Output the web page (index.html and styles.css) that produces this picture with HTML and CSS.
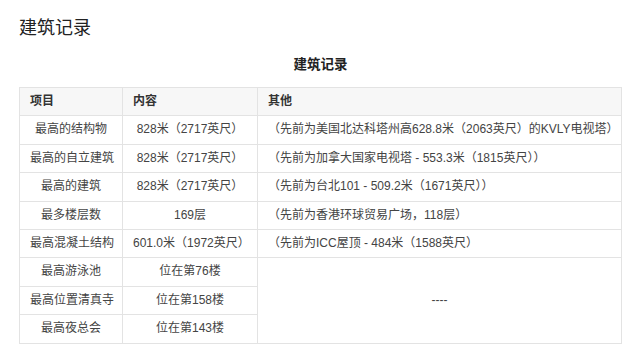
FILE: index.html
```html
<!DOCTYPE html>
<html lang="zh">
<head>
<meta charset="utf-8">
<link rel="stylesheet" href="styles.css">
</head>
<body>
<div class="page">
  <h2 class="title">建筑记录</h2>
  <table class="records">
    <caption>建筑记录</caption>
    <colgroup>
      <col class="c1"><col class="c2"><col class="c3">
    </colgroup>
    <thead>
      <tr><th>项目</th><th>内容</th><th>其他</th></tr>
    </thead>
    <tbody>
      <tr><td class="ctr">最高的结构物</td><td class="ctr">828米（2717英尺）</td><td>（先前为美国北达科塔州高628.8米（2063英尺）的KVLY电视塔）</td></tr>
      <tr><td class="ctr">最高的自立建筑</td><td class="ctr">828米（2717英尺）</td><td>（先前为加拿大国家电视塔 - 553.3米（1815英尺））</td></tr>
      <tr><td class="ctr">最高的建筑</td><td class="ctr">828米（2717英尺）</td><td>（先前为台北101 - 509.2米（1671英尺））</td></tr>
      <tr><td class="ctr">最多楼层数</td><td class="ctr">169层</td><td>（先前为香港环球贸易广场，118层）</td></tr>
      <tr><td class="ctr">最高混凝土结构</td><td class="ctr">601.0米（1972英尺）</td><td>（先前为ICC屋顶 - 484米（1588英尺）</td></tr>
      <tr><td class="ctr">最高游泳池</td><td class="ctr">位在第76楼</td><td class="ctr" rowspan="3">----</td></tr>
      <tr><td class="ctr">最高位置清真寺</td><td class="ctr">位在第158楼</td></tr>
      <tr><td class="ctr">最高夜总会</td><td class="ctr">位在第143楼</td></tr>
    </tbody>
  </table>
</div>
</body>
</html>
```

FILE: styles.css
```css
html, body {
  margin: 0;
  padding: 0;
  background: #fff;
}
body {
  font-family: "Liberation Sans", "Noto Sans CJK SC", sans-serif;
  color: #333;
}
.page {
  padding: 16px 19px 0 19px;
}
.title {
  margin: 0;
  font-size: 18px;
  line-height: 24px;
  font-weight: normal;
  color: #222;
}
.records {
  width: 602px;
  table-layout: fixed;
  border-collapse: collapse;
  border: 1px solid #e3e3e3;
  font-size: 12px;
  color: #444;
}
.records caption {
  font-size: 13.5px;
  font-weight: bold;
  color: #222;
  line-height: 20px;
  padding: 15px 0 12px 0;
}
.c1 { width: 103px; }
.c2 { width: 135px; }
.c3 { width: 364px; }
.records th,
.records td {
  border: 1px solid #e3e3e3;
  padding: 5px 10px;
  line-height: 17.4px;
  white-space: nowrap;
  text-align: left;
}
.records th {
  background: #f7f7f7;
  font-weight: bold;
  color: #333;
}
.records td.ctr {
  text-align: center;
}
```
